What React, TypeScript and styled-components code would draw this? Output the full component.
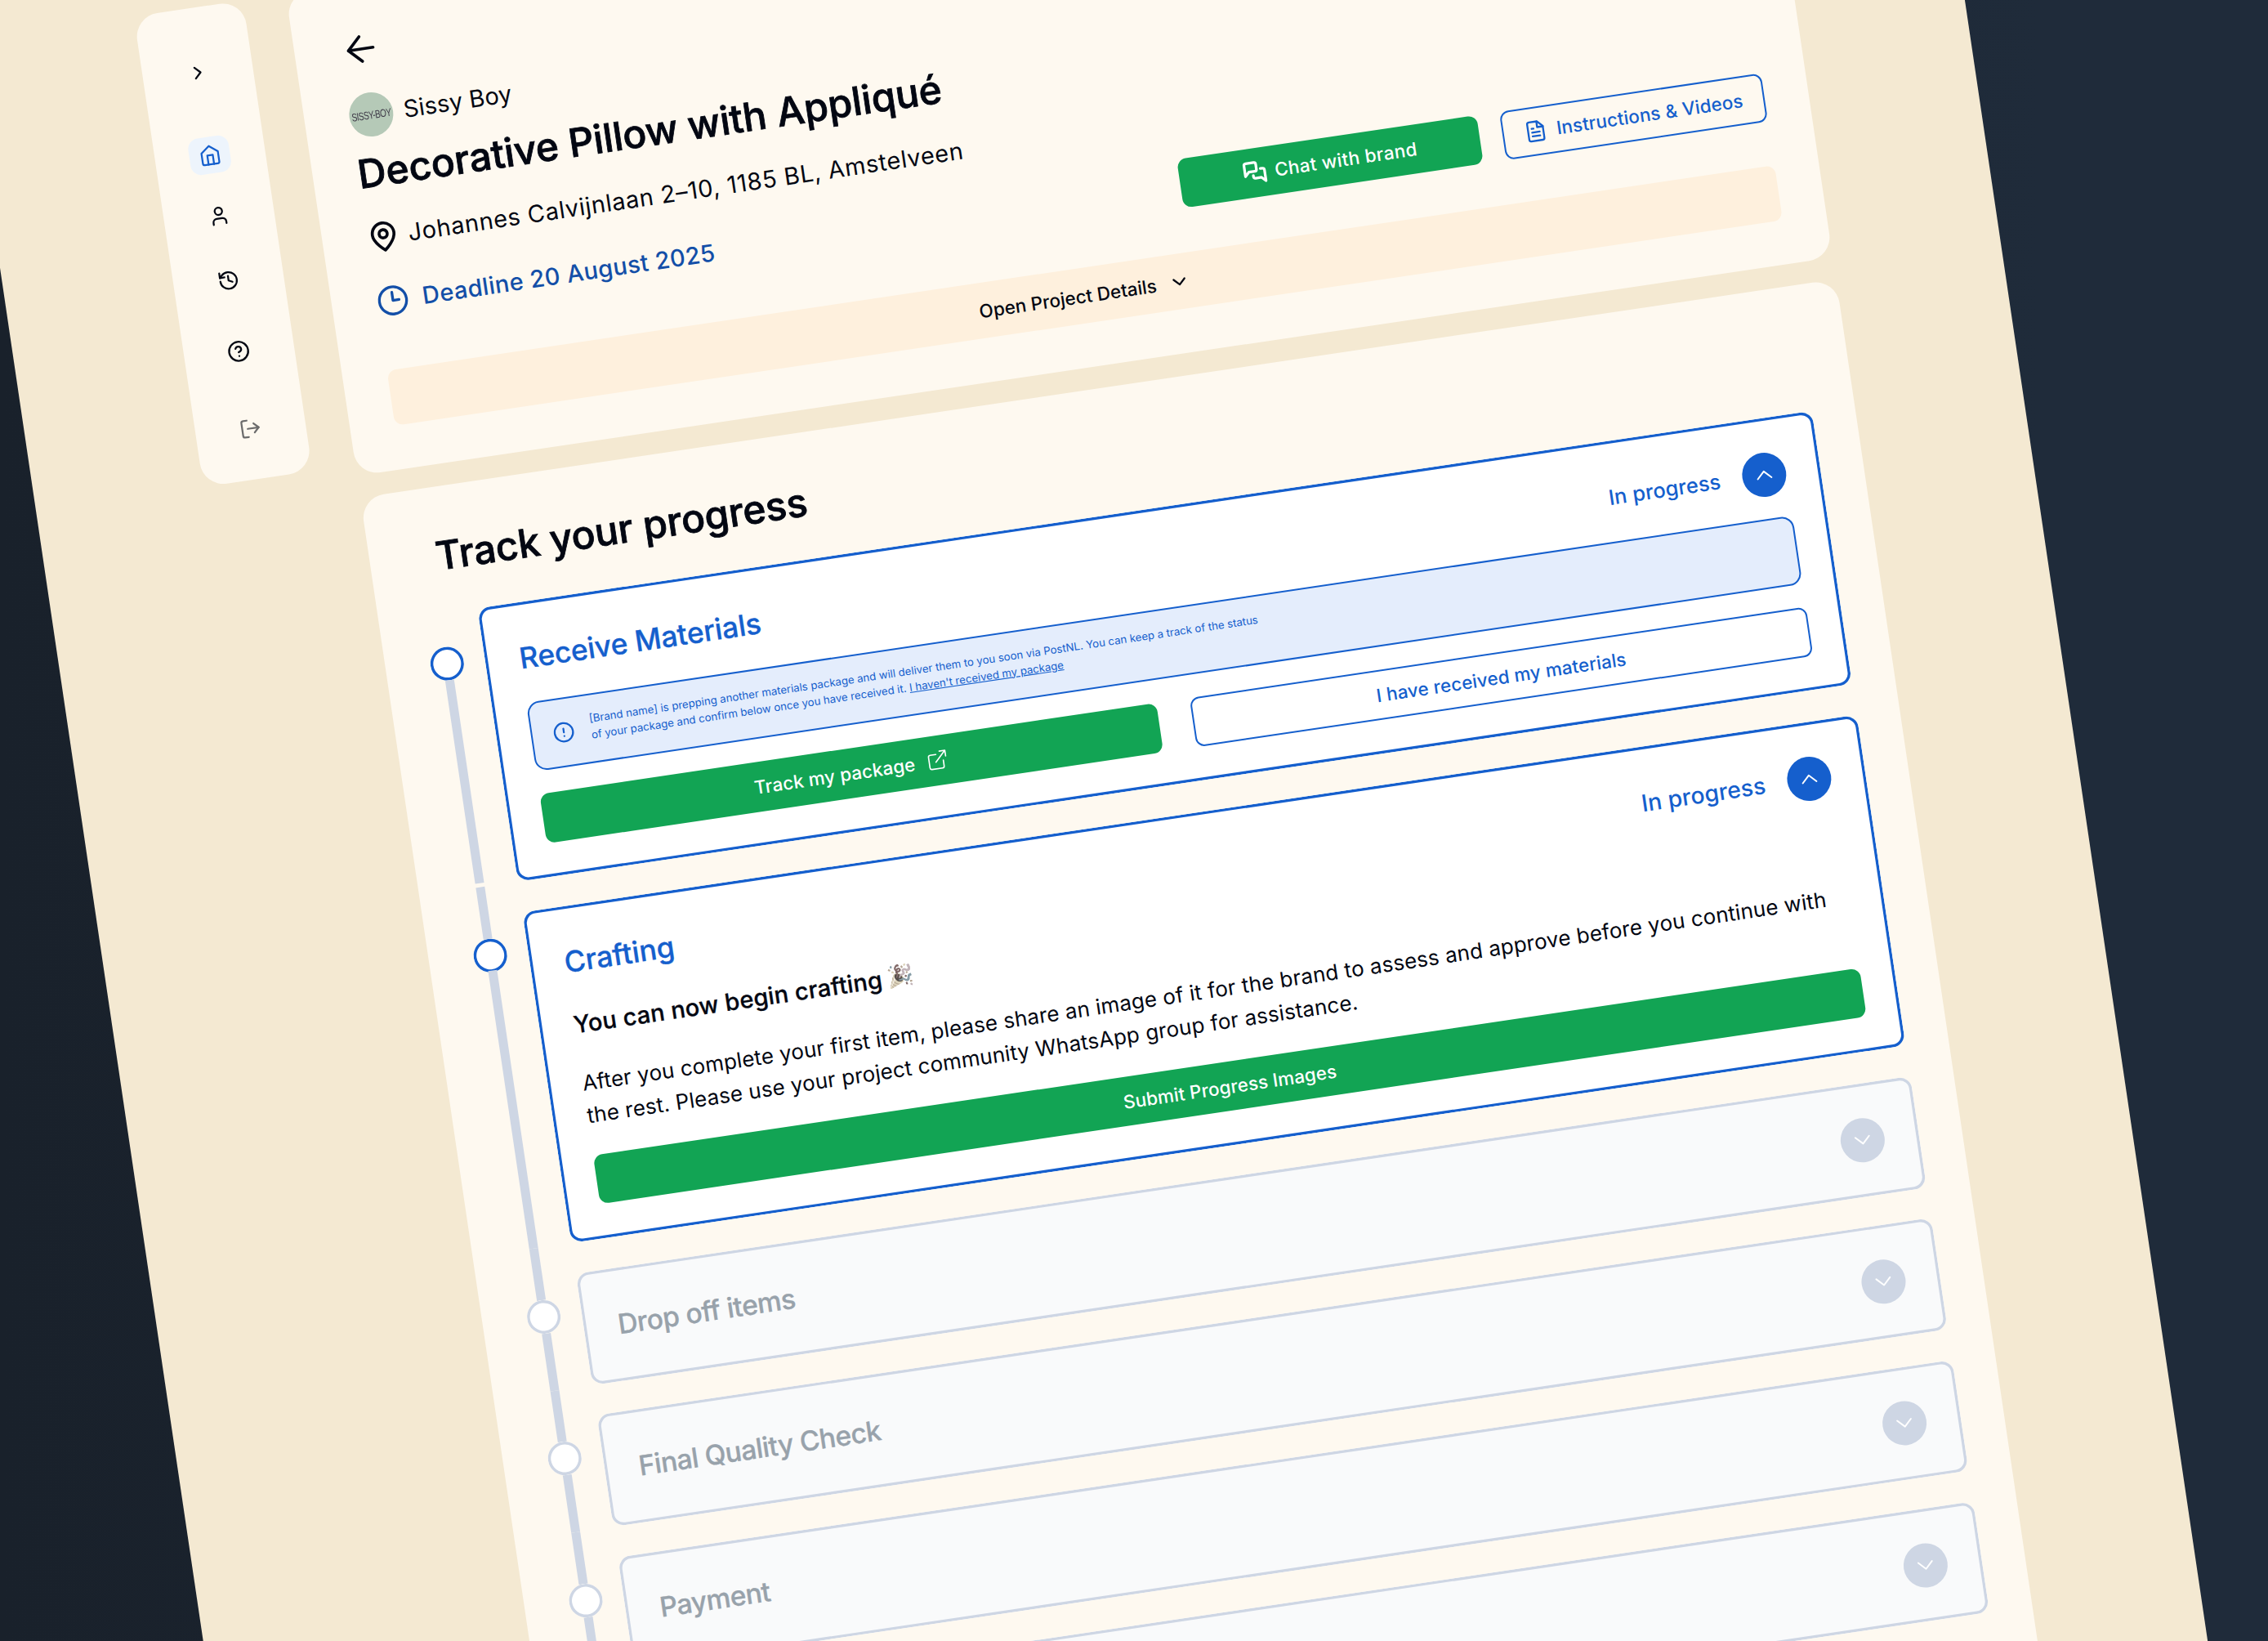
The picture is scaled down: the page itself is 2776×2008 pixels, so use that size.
import styled, { createGlobalStyle } from "styled-components";
import {
    ArrowLeft,
    ChevronDown,
    ChevronRight,
    ChevronUp,
    CircleAlert,
    CircleHelp,
    History,
    LogOut,
    User
} from "lucide-react";

const BLUE = "#155fcd";
const GREY = "#ced6e4";

const GlobalStyle = createGlobalStyle`
  body {
    margin: 0;
    overflow: hidden;
    font-family: Inter, "Liberation Sans", sans-serif;
    color: #030712;
  }

  * {
    box-sizing: border-box;
  }

  svg {
    display: block;
    flex-shrink: 0;
  }
`

const Stage = styled.div`
  width: 2776px;
  height: 2008px;
  overflow: hidden;
  background: linear-gradient(90deg, #19212b 0%, #1c2531 40%, #1f2b3a 90%);
`

const Page = styled.div`
  display: flex;
  align-items: flex-start;
  gap: 53.5px;
  width: 2427px;
  height: 2440px;
  margin-left: -48px;
  padding: 44px 0 0 206.5px;
  background: #f4e9d2;
  transform: rotate(-8.42deg);
  transform-origin: 48px 0;
`

const Sidebar = styled.nav`
  display: flex;
  flex-direction: column;
  align-items: center;
  width: 135px;
  height: 582px;
  padding-top: 56.5px;
  border-radius: 29px;
  background: #fef9f0;
`

const NavItem = styled.a<{ $gap: number; $active?: boolean; $color?: string }>`
  display: flex;
  align-items: center;
  justify-content: center;
  width: 50px;
  height: 45px;
  margin-bottom: ${props => props.$gap}px;
  border-radius: 13px;
  color: ${props => props.$active ? BLUE : props.$color || "#030712"};
  background: ${props => props.$active ? "#edf4fc" : "transparent"};
`

const Main = styled.main`
  display: flex;
  flex-direction: column;
  gap: 27.2px;
  width: 1826px;
`

const HeaderCard = styled.section`
  display: flex;
  flex-direction: column;
  height: 595.5px;
  padding: 54px 54px 54px 55px;
  border-radius: 29px;
  background: #fef9f0;
`

const BrandRow = styled.div`
  display: flex;
  align-items: center;
  gap: 13px;
  margin-top: 28px;
`

const Avatar = styled.div`
  display: flex;
  align-items: center;
  justify-content: center;
  width: 54px;
  height: 54px;
  border-radius: 50%;
  background: #b5c9b7;
`

const AvatarLogo = styled.span`
  font: 10px "Liberation Sans", sans-serif;
  letter-spacing: -0.5px;
  color: #3f3b48;
  transform: scaleY(1.35);
`

const BrandName = styled.span`
  font-size: 29px;
  line-height: 36px;
  letter-spacing: 0.1px;
`

const Title = styled.h1`
  margin: 15px 0 0;
  font-size: 48px;
  line-height: 58px;
  font-weight: 500;
  letter-spacing: -0.05px;
  -webkit-text-stroke: 0.8px currentColor;
`

const AddressRow = styled.div`
  display: flex;
  align-items: center;
  gap: 10.5px;
  height: 40px;
  margin-top: 29.5px;
  font-size: 29px;
  letter-spacing: 0.65px;
`

const HeaderBottom = styled.div`
  display: flex;
  align-items: center;
  justify-content: space-between;
  margin-top: 29px;
`

const Deadline = styled.div`
  display: flex;
  align-items: center;
  gap: 16.5px;
  font-size: 29px;
  font-weight: 500;
  letter-spacing: 0.4px;
  color: #134fa8;
`

const HeaderButtons = styled.div`
  display: flex;
  gap: 28px;
`

const Button = styled.button<{ $width?: number; $gap?: number; $spacing?: number }>`
  display: flex;
  align-items: center;
  justify-content: center;
  gap: ${props => props.$gap || 0}px;
  width: ${props => props.$width ? props.$width + "px" : "100%"};
  height: 60.5px;
  padding: 0;
  border: none;
  border-radius: 11px;
  font: 500 22.5px Inter, "Liberation Sans", sans-serif;
  letter-spacing: ${props => props.$spacing || 0.1}px;
  color: #fff;
  background: #12a454;
`

const OutlineButton = styled(Button)`
  border: 2px solid ${BLUE};
  color: ${BLUE};
  background: transparent;
`

const DetailsBar = styled.div`
  display: flex;
  align-items: center;
  justify-content: center;
  gap: 15px;
  height: 68px;
  margin-top: 53.5px;
  padding-top: 1px;
  border-radius: 11px;
  font-size: 22.5px;
  font-weight: 500;
  background: #fef0dd;
`

const ProgressCard = styled.section`
  height: 1750px;
  padding: 56px 53px 0 55px;
  border-radius: 29px;
  background: #fef9f0;
`

const ProgressTitle = styled.h2`
  margin: 0 0 41.5px 26px;
  font-size: 48px;
  line-height: 58px;
  font-weight: 500;
  letter-spacing: -0.1px;
  -webkit-text-stroke: 0.8px currentColor;
`

const StepRow = styled.div`
  display: flex;
  gap: 25.5px;
`

const Rail = styled.div`
  display: flex;
  flex-direction: column;
  align-items: center;
  width: 41px;
`

const RailTop = styled.div<{ $first?: boolean }>`
  width: 10.5px;
  height: ${props => props.$first ? 41.2 : 63.8}px;
  background: ${props => props.$first ? "transparent" : GREY};
`

const RailDot = styled.div<{ $active?: boolean }>`
  width: 41px;
  height: 41px;
  border-radius: 50%;
  background: #fff;
  box-shadow: inset 0 0 0 3.5px ${props => props.$active ? BLUE : GREY};
`

const RailBottom = styled.div<{ $first?: boolean; $over?: boolean }>`
  flex: 1;
  width: 10.5px;
  margin-top: ${props => props.$over ? -2 : 0}px;
  margin-bottom: ${props => props.$first ? 5.5 : 0}px;
  background: ${GREY};
`

// inset shadow keeps the fractional outline width that a border would round down
const StepCard = styled.div<{ $active?: boolean; $first?: boolean }>`
  flex: 1;
  margin-top: ${props => props.$first ? 0 : 37.7}px;
  padding: 41.8px 42px 41.8px 42.5px;
  border-radius: 15px;
  background: ${props => props.$active ? "#fff" : "#f9fafb"};
  box-shadow: inset 0 0 0 3.4px ${props => props.$active ? BLUE : GREY};
`

const StepHeader = styled.div`
  display: flex;
  align-items: center;
  height: 54px;
`

const StepTitle = styled.h3<{ $active?: boolean }>`
  flex: 1;
  margin: 0;
  font-size: ${props => props.$active ? 35.5 : 33.5}px;
  font-weight: 500;
  letter-spacing: ${props => props.$active ? -0.1 : -0.55}px;
  -webkit-text-stroke: 0.3px currentColor;
  color: ${props => props.$active ? BLUE : "#98a2ab"};
`

const Status = styled.span<{ $size: number }>`
  margin-right: 27px;
  font-size: ${props => props.$size}px;
  font-weight: 500;
  letter-spacing: 0.1px;
  color: ${BLUE};
`

const Toggle = styled.div<{ $active?: boolean }>`
  display: flex;
  align-items: center;
  justify-content: center;
  width: 54px;
  height: 54px;
  border-radius: 50%;
  color: #fff;
  background: ${props => props.$active ? BLUE : GREY};
`

const InfoBox = styled.div`
  display: flex;
  align-items: center;
  gap: 19.5px;
  height: 85px;
  margin-top: 27.2px;
  padding-left: 25px;
  border: 2px solid ${BLUE};
  border-radius: 15px;
  color: ${BLUE};
  background: #e4edfc;
`

const InfoText = styled.p`
  margin: 0 0 6px;
  font-size: 13.23px;
  line-height: 20px;
  white-space: nowrap;
`

const StepButtons = styled.div`
  display: grid;
  grid-template-columns: 1fr 1fr;
  gap: 40.5px;
  margin-top: 28px;
`

const CraftNote = styled.p`
  display: flex;
  align-items: center;
  gap: 6px;
  margin: 30px 0 0;
  font-size: 29px;
  line-height: 40px;
  font-weight: 500;
  letter-spacing: 0.15px;
  -webkit-text-stroke: 0.3px currentColor;
`

const Emoji = styled.span`
  padding-bottom: 5px;
  font-size: 26px;
  line-height: 35px;
  filter: grayscale(0.88) brightness(1.1);
`

const CraftText = styled.p`
  margin: 32px 0 29px;
  font-size: 26px;
  line-height: 40px;
  letter-spacing: 0.16px;
  white-space: nowrap;
`

const HomeIcon = () => (
    <svg width="27" height="27" viewBox="0 0 24 24" fill="none" stroke="currentColor" strokeWidth="2" strokeLinecap="round" strokeLinejoin="round">
        <path d="M3 9l9-7 9 7v11a2 2 0 0 1-2 2H5a2 2 0 0 1-2-2z"/>
        <path d="M9 22V12h6v10"/>
    </svg>
)

const PinIcon = () => (
    <svg width="40" height="40" viewBox="0 0 24 24" fill="none" stroke="currentColor" strokeWidth="2.2" strokeLinecap="round" strokeLinejoin="round">
        <path d="M20 10c0 6-8 12-8 12s-8-6-8-12a8 8 0 0 1 16 0Z"/>
        <circle cx="12" cy="10" r="3"/>
    </svg>
)

const ClockIcon = () => (
    <svg width="40" height="40" viewBox="0 0 24 24" fill="none" stroke="currentColor" strokeWidth="2" strokeLinecap="round" strokeLinejoin="round">
        <circle cx="12" cy="12" r="10"/>
        <path d="M12 6v6h4.5"/>
    </svg>
)

const ChatIcon = () => (
    <svg width="29" height="29" viewBox="0 0 24 24" fill="none" stroke="currentColor" strokeWidth="2.7" strokeLinecap="round" strokeLinejoin="round">
        <path d="M14 9a2 2 0 0 1-2 2H6l-4 4V4c0-1.1.9-2 2-2h8a2 2 0 0 1 2 2v5Z"/>
        <path d="M18 9h2a2 2 0 0 1 2 2v11l-4-4h-6a2 2 0 0 1-2-2v-1"/>
    </svg>
)

const FileIcon = () => (
    <svg width="28" height="28" viewBox="0 0 24 24" fill="none" stroke="currentColor" strokeWidth="2" strokeLinecap="round" strokeLinejoin="round">
        <path d="M14.5 2H6a2 2 0 0 0-2 2v16a2 2 0 0 0 2 2h12a2 2 0 0 0 2-2V7.5L14.5 2z"/>
        <path d="M14 2v6h6M16 13H8M16 17H8M10 9H8"/>
    </svg>
)

const ExternalIcon = () => (
    <svg width="28" height="28" viewBox="0 0 24 24" fill="none" stroke="currentColor" strokeWidth="1.4" strokeLinecap="round" strokeLinejoin="round">
        <path d="M18 13v6a2 2 0 0 1-2 2H5a2 2 0 0 1-2-2V8a2 2 0 0 1 2-2h6"/>
        <path d="M15 3h6v6M10 14L21 3"/>
    </svg>
)

const lockedSteps = ["Drop off items", "Final Quality Check", "Payment", ""]

const App = () => {
    return <Stage>
        <GlobalStyle/>
        <Page>
            <Sidebar>
                <NavItem $gap={57.3}><ChevronRight size={27}/></NavItem>
                <NavItem $gap={30.7} $active><HomeIcon/></NavItem>
                <NavItem $gap={34.2}><User size={27}/></NavItem>
                <NavItem $gap={43}><History size={27}/></NavItem>
                <NavItem $gap={50.3}><CircleHelp size={28}/></NavItem>
                <NavItem $gap={0} $color={"#6c6c6c"}><LogOut size={27}/></NavItem>
            </Sidebar>
            <Main>
                <HeaderCard>
                    <ArrowLeft size={52} strokeWidth={1.7}/>
                    <BrandRow>
                        <Avatar><AvatarLogo>SISSY-BOY</AvatarLogo></Avatar>
                        <BrandName>Sissy Boy</BrandName>
                    </BrandRow>
                    <Title>Decorative Pillow with Appliqué</Title>
                    <AddressRow>
                        <PinIcon/>
                        Johannes Calvijnlaan 2–10, 1185 BL, Amstelveen
                    </AddressRow>
                    <HeaderBottom>
                        <Deadline>
                            <ClockIcon/>
                            Deadline 20 August 2025
                        </Deadline>
                        <HeaderButtons>
                            <Button $width={371} $gap={10} $spacing={0.35}>
                                <ChatIcon/>
                                Chat with brand
                            </Button>
                            <OutlineButton $width={324} $gap={12}>
                                <FileIcon/>
                                Instructions &amp; Videos
                            </OutlineButton>
                        </HeaderButtons>
                    </HeaderBottom>
                    <DetailsBar>
                        Open Project Details
                        <ChevronDown size={27}/>
                    </DetailsBar>
                </HeaderCard>
                <ProgressCard>
                    <ProgressTitle>Track your progress</ProgressTitle>
                    <StepRow>
                        <Rail>
                            <RailTop $first/>
                            <RailDot $active/>
                            <RailBottom $first/>
                        </Rail>
                        <StepCard $active $first>
                            <StepHeader>
                                <StepTitle $active>Receive Materials</StepTitle>
                                <Status $size={25.5}>In progress</Status>
                                <Toggle $active><ChevronUp size={34} strokeWidth={1.4}/></Toggle>
                            </StepHeader>
                            <InfoBox>
                                <CircleAlert size={27}/>
                                <InfoText>
                                    [Brand name] is prepping another materials package and will deliver them to you soon via PostNL. You can keep a track of the status<br/>
                                    of your package and confirm below once you have received it. <u>I haven't received my package</u>
                                </InfoText>
                            </InfoBox>
                            <StepButtons>
                                <Button $gap={14}>
                                    Track my package
                                    <ExternalIcon/>
                                </Button>
                                <OutlineButton>I have received my materials</OutlineButton>
                            </StepButtons>
                        </StepCard>
                    </StepRow>
                    <StepRow>
                        <Rail>
                            <RailTop/>
                            <RailDot $active/>
                            <RailBottom $over/>
                        </Rail>
                        <StepCard $active>
                            <StepHeader>
                                <StepTitle $active>Crafting</StepTitle>
                                <Status $size={28.3}>In progress</Status>
                                <Toggle $active><ChevronUp size={34} strokeWidth={1.4}/></Toggle>
                            </StepHeader>
                            <CraftNote>
                                You can now begin crafting
                                <Emoji>🎉</Emoji>
                            </CraftNote>
                            <CraftText>
                                After you complete your first item, please share an image of it for the brand to assess and approve before you continue with<br/>
                                the rest. Please use your project community WhatsApp group for assistance.
                            </CraftText>
                            <Button>Submit Progress Images</Button>
                        </StepCard>
                    </StepRow>
                    {lockedSteps.map((step, i) => (
                        <StepRow key={i}>
                            <Rail>
                                <RailTop/>
                                <RailDot/>
                                <RailBottom/>
                            </Rail>
                            <StepCard>
                                <StepHeader>
                                    <StepTitle>{step}</StepTitle>
                                    <Toggle><ChevronDown size={34} strokeWidth={1.4}/></Toggle>
                                </StepHeader>
                            </StepCard>
                        </StepRow>
                    ))}
                </ProgressCard>
            </Main>
        </Page>
    </Stage>
}

export default App;
